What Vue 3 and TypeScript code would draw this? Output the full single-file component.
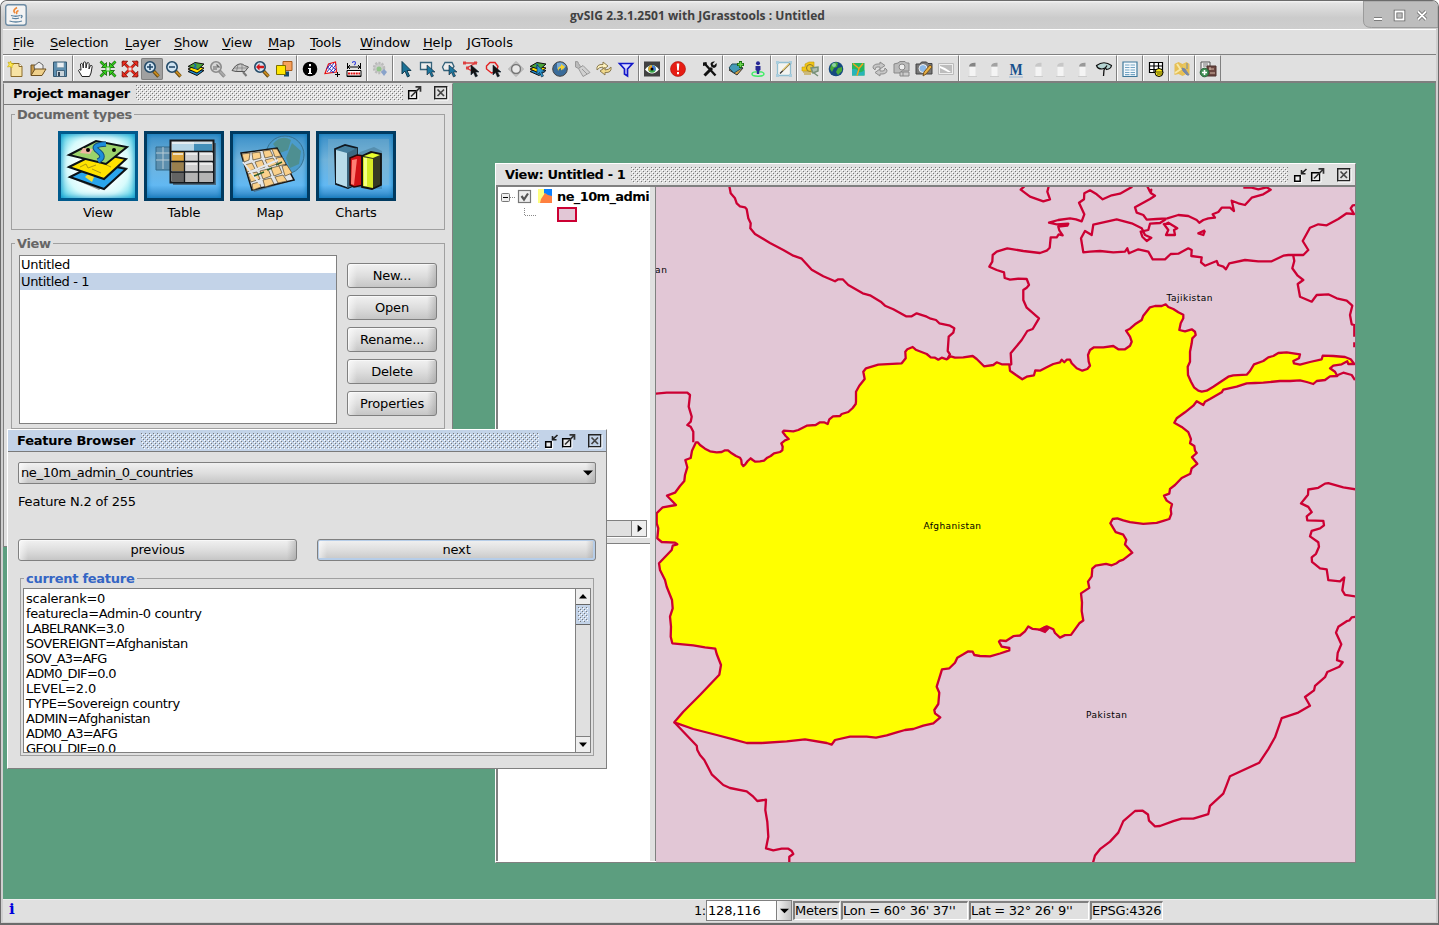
<script setup lang="ts">
type Pt = number[]

function trace(ox: number, oy: number, raw: string, sy = 3): Pt[] {
  return raw.trim().split(/\s+/).map((p) => {
    const [x, y] = p.split(',').map(Number)
    return [ox + x / 3, oy + y / sy]
  })
}
const NW = (s: string) => trace(490, 155, s)
const NE = (s: string) => trace(930, 155, s)
const SW = (s: string) => trace(650, 380, s)
const SE = (s: string) => trace(1000, 380, s, 2.877)
const toPoints = (...parts: Pt[][]) =>
  parts.flat().map((p) => p[0].toFixed(1) + ',' + p[1].toFixed(1)).join(' ')

const afghanistan = toPoints(
  SW('138,187 143,187 150,195 165,206 180,214 200,217 215,216 225,211 234,211 245,220 258,228 270,233 274,240 275,252 280,258 286,253 293,243 302,235 308,240 316,245 330,244 342,242 352,233 362,228 372,220 390,216 397,211 398,200 394,190 405,181 416,177 407,168 398,156 401,152 430,154 445,150 470,137 497,135 510,127 522,127 533,132 538,118 549,109 570,108 575,102 595,96 608,84 617,72'),
  NW('1098,740 1098,710 1108,692 1124,672 1120,650 1128,640 1165,629 1235,625 1247,610 1246,590 1252,583 1268,576 1277,584 1310,597 1322,607 1335,608 1345,614'),
  NE('35,608 50,613 62,604 75,608 100,607 128,603 140,612 150,622 162,634 190,630 200,622 215,628 238,628 240,647 258,660 277,673 290,665 312,661 316,646 330,647 350,637 370,627 390,622 395,614 403,622 410,614 420,614 425,625 440,640 457,647 472,642 480,632 476,620 474,600 480,585 492,577 520,577 550,573 565,583 585,583 600,572 605,560 600,545 588,527 600,521 615,508 635,495 640,482 660,457 675,453 695,453 707,448 715,456 730,462 745,472 760,479 760,490 752,505 748,525 765,529 785,523 795,530 797,540 787,550 785,565 780,590 780,620 773,635 774,660 783,680 792,697 805,707 815,710 830,707 850,695 870,682 895,665 910,661 950,659 960,648 972,628 1000,618 1015,607 1030,603 1045,594 1070,592 1110,598 1107,610 1090,618 1092,625 1110,629 1140,621 1175,613 1178,602 1210,603 1245,606 1262,613 1273,627 1255,627 1252,619 1235,628 1210,632 1200,640 1215,650 1222,663 1200,664 1185,675 1160,678 1150,687 1130,681 1110,676 1080,678 1050,678 1000,683 975,684 950,685 920,695 880,704 875,712 840,732 825,740 820,750 800,739 790,752 765,772 740,790 733,803'),
  SE('545,135 565,150 573,170 570,182 583,190 585,203 590,210 576,222 592,241 575,254 571,270 545,282 525,302 510,313 508,327 492,333 500,347 516,357 512,372 514,385 508,400 490,405 470,411 430,414 390,409 370,404 352,398 338,400 331,412 347,438 370,445 379,460 375,473 397,497 370,517 358,521 350,527 335,533 318,529 287,534 277,543 275,565 264,580 268,598 243,614 246,640 245,665 250,692 238,700 213,733 195,734 180,741 165,728 160,717 140,709 120,718 98,716 85,709 75,723 60,735 40,737 18,751 0,749 -3,753 5,767 28,771 28,778 0,787'),
  SW('1020,829 990,828 973,825 968,815 955,814 940,823 922,833 915,848 898,865 876,868 860,920 868,938 865,972 853,990 855,1000 871,1012 850,1030 820,1037 790,1047 765,1050 740,1057 710,1066 678,1073 650,1070 600,1070 555,1080 545,1094 530,1089 465,1078 410,1084 335,1089 290,1089 250,1078 200,1065 130,1047 73,1027 100,995 150,945 208,884 213,855 200,822 196,806 165,802 130,796 67,790 62,770 63,740 60,710 68,685 66,660 50,620 45,600 30,570 27,550 65,510 68,497 82,493 75,488 35,486 22,475 25,445 20,430 20,400 38,382 78,375 51,347 75,338 90,318 103,303 105,285 112,262 106,240 122,234 126,212 134,195'),
)

const borders: string[] = [
  toPoints(NW('718,93 722,115 735,130 740,145 750,154 765,157 770,163 775,190 782,205 781,220 795,237 840,264 880,285 910,302 935,311 965,344 1000,364 1035,379 1045,373 1058,373 1075,390 1118,415 1140,421 1172,440 1185,452 1210,463 1248,484 1265,484 1280,475 1310,485'), NE('2,491 18,495 28,505 60,512 73,520 70,533 56,545 53,588 60,598 52,612')),
  toPoints(SW('15,41 50,38 112,38 120,45 116,80 125,110 122,125 112,135 122,140 130,155 130,187')),
  toPoints(SW('73,1027 140,1097 142,1110 150,1125 163,1140 185,1183 220,1215 240,1224 290,1234 310,1250 322,1263 348,1259 346,1290 352,1325 355,1370 348,1405 370,1411 395,1406 415,1406 425,1413 430,1422 418,1430 418,1450')),
  toPoints(NE('240,630 244,628 242,595 275,555 292,528 308,522 327,490 290,458 280,435 280,405 290,398 297,390 290,372 265,371 240,374 224,369 222,352 200,345 178,335 187,320 188,300 200,290 232,280 280,288 330,294 350,287 359,278 362,247 380,247 386,238 398,241 388,226 385,215 412,212 415,206 380,208 357,203 385,195 420,190 438,193 455,199 463,178 447,143 462,133 463,115 480,106 500,118 518,133 545,121 570,116 607,95')),
  toPoints(NE('283,94 272,104 300,125 340,139 360,133 352,110 356,94')),
  toPoints(NE('652,94 660,110 664,104 662,114 675,122 660,132 615,157 620,173 640,180 650,194 680,192 712,190 745,180 775,183 800,195 808,203 820,195 835,190 855,188 848,178 865,171 875,158 900,158 912,168 905,137 925,145 945,150 965,128 1000,118 1022,104 1010,97 985,103 965,98 940,98')),
  toPoints(NE('708,192 690,204 660,206 655,225 632,230 637,245 650,258 664,248 645,240 635,220 605,205 560,193 490,209 485,240 465,228 453,250 460,292 480,290 510,288 550,292 585,290 592,280 597,295 625,283 655,290 668,313 705,313 722,297 745,296 775,280 785,285 784,303 815,307 813,322 825,332 860,318 865,330 880,335 888,343 898,325 945,315 985,319 1025,319 1060,302 1075,300 1120,300 1135,285 1118,258 1140,218 1165,208 1190,211 1225,192 1250,175 1272,177 1262,160 1268,151 1277,150')),
  toPoints(NE('700,205 715,225 708,240 735,240 732,225 742,220 715,203 705,208')),
  toPoints(NE('825,226 805,235 820,240 825,226')),
  toPoints(NE('1090,302 1093,318 1087,340 1103,362 1120,375 1103,387 1110,425 1145,440 1160,420 1195,418 1220,430 1250,437 1267,452 1260,480 1265,508 1273,510 1273,545')),
  toPoints(NE('1273,562 1273,577')),
  toPoints(NE('1222,661 1240,653 1265,660 1275,675')),
  toPoints(SE('1070,315 1030,309 985,297 975,298 955,310 925,315 924,330 903,355 925,365 935,380 920,392 922,404 970,405 972,418 960,427 935,434 930,450 955,467 957,480 948,500 935,510 936,523 960,542 980,545 985,576 1020,579 1033,568 1027,605 1035,618 1068,623')),
  toPoints(SE('1070,681 1055,683 1048,692 1040,694 1015,710 1008,727 1024,760 1013,785 1011,806 1028,812 1018,825 982,840 975,855 945,880 942,893 915,912 930,937 895,957 845,973 825,1028 805,1062 778,1101 690,1140 680,1165 670,1190 630,1225 625,1249 580,1262 545,1262 520,1269 480,1283 465,1284 447,1268 444,1250 428,1239 405,1240 370,1269 355,1302 330,1328 300,1350 285,1368 278,1392')),
]

const cursor = (f: string) => `<path d="M8 5v10l2.500-2.500 2 4.500 2-1-2-4h3.500z" fill="${f}" stroke="#123" stroke-width=".6"/>`
const lens = (inner: string, ring = '#234a68', face = '#cfe3f2', handle = '#c98a1e') =>
  `<path d="M10.500 11l5 5.500" stroke="${ring === '#8b8b8b' ? '#888' : '#5c430d'}" stroke-width="3.400"/><path d="M11 11.500l4.500 4.500" stroke="${handle}" stroke-width="2"/><circle cx="7" cy="7" r="5.200" fill="${face}" stroke="${ring}" stroke-width="1.600"/>${inner}`
const marker = (top: string) =>
  `<path d="M6.500 7h6v9.500h-6z" fill="#f4f4f4"/><path d="M6 6.500q0-4 6.500-3.800v3.800z" fill="${top}"/><path d="M5 16.500h9" stroke="#ccc"/>`
const arrows4 = (c: string, dark: string, out: boolean) => {
  const head = out ? 'M1.200 1.200h5.500l-5.500 5.500z' : 'M7.500 2.500v5h-5z'
  const one = `<path d="M1.500 1.500l6 6" stroke="${dark}" stroke-width="2.600"/><path d="M1.500 1.500l6 6" stroke="${c}" stroke-width="1.400"/><path d="${head}" fill="${c}" stroke="${dark}" stroke-width=".8"/>`
  return [0, 90, 180, 270].map((a) => `<g transform="rotate(${a} 9 9)">${one}</g>`).join('') + `<path d="M7 7h4v4H7z" fill="#e6e6e6" stroke="${c}"/>`
}
const layers = (top: string) =>
  `<path d="M1 11.500l7-3 9 2-7 5z" fill="#1d87c9" stroke="#111"/><path d="M1 9l7-3 9 2-7 5z" fill="#ffe000" stroke="#111"/><path d="M1 6.500l7-4 9 1.500-6 5.500z" fill="${top}" stroke="#111"/><path d="M7 4q3 1 1 2.500t2 2" fill="none" stroke="#1565a8" stroke-width="1.500"/>`

const toolGroups: { sel?: number; gap?: boolean; icons: string[] }[] = [
  { icons: [
    `<path d="M4 3.500h8l3 3V16.500H4z" fill="#f7e3a4" stroke="#8a6a2a"/><path d="M12 3.500v3h3" fill="#fff" stroke="#8a6a2a"/><path d="M3.500 1l1 2.500L7 4 5 5.500 5 8 3 6.500 .5 7 2 4.500 1 2l2 1z" fill="#ffe94a" stroke="#c4a90c" stroke-width=".6"/>`,
    `<path d="M2 15V5h4l1 2h6v8z" fill="#c79a4b" stroke="#6e5120"/><path d="M5 6l5-4 4 3v6H6z" fill="#ededed" stroke="#666"/><path d="M2 15.500l4-6.500h11l-4 6.500z" fill="#efd08a" stroke="#6e5120"/>`,
    `<path d="M2.500 2h13v14.500h-13z" fill="#5e8fb0" stroke="#33566e"/><path d="M6 2.500h7v5H6z" fill="#e8eef2" stroke="#7b98aa" stroke-width=".6"/><path d="M5.500 10.500h8v6h-8z" fill="#c9d4db" stroke="#33566e" stroke-width=".8"/><path d="M7 12h2v4H7z" fill="#345"/>`,
  ] },
  { sel: 3, icons: [
    `<path d="M5 16.500L1.500 10.500q.5-1.700 2.500-.3L3.500 4q1.200-1.300 2.200.2L6.300 8 6.500 2.500q1.300-1.300 2.300 0L9 8l1-5q1.500-1 2.200.5L12 9l1.500-3.500q1.700-.5 1.700 1L14 13l-1.500 3.500z" fill="#fff" stroke="#222" stroke-width="1"/>`,
    arrows4('#35d11c', '#155c0c', false),
    arrows4('#ef2b1c', '#7c120c', true),
    lens(`<path d="M4 7h6M7 4v6" stroke="#1b4263" stroke-width="1.500"/>`),
    lens(`<path d="M4 7h6" stroke="#1b4263" stroke-width="1.500"/>`),
    layers('#4ba53a'),
    lens(`<path d="M4 7h6l-2.500-2.500M4 9h4" stroke="#666" fill="none" stroke-width="1.200"/>`, '#8b8b8b', '#d5d5d5', '#aaa'),
    `<path d="M1 10.500l3.500-4.500q5-4 9-.5l4 1.500-3.500 4.500H5z" fill="#c9c9c9" stroke="#555"/><path d="M3 8h13M7 4.500l-1.500 7M11 4v7" stroke="#777" stroke-width=".7"/><path d="M12 12l3.500 4" stroke="#777" stroke-width="2"/>`,
    lens(`<path d="M3 7l3.500-3.500v2.200h4.500v2.600H6.500v2.200z" fill="#d3161b"/>`),
    `<path d="M8 1.500h9v9H8z" fill="#f7a15c" stroke="#a85c1c"/><path d="M9 11.500h5v5H9z" fill="#174a6e"/><path d="M1.500 5.500h9v9h-9z" fill="#ffe600" stroke="#7c7000"/>`,
  ] },
  { icons: [
    `<circle cx="9" cy="9" r="7.300" fill="#000"/><path d="M7 8h3v5h1v1H7v-1h1V9H7zM8 4h2v2.300H8z" fill="#fff"/>`,
    `<path d="M2 13.500L5.500 4 12.500 2l1 10z" fill="#fff" stroke="#e60d0d" stroke-width="1.200"/><path d="M4 12l7-9M7 12.500l6-8M3.500 9l4-5M10 12.500l3-4M4.500 7l6.500 6M6.500 4l6.500 6" stroke="#1c20b8" stroke-width=".9"/><path d="M12 14.500h5M14.500 12v5" stroke="#000"/>`,
    `<path d="M2.500 3v6M15.500 3v6M3 7h12M5 5L3 7l2 2M13 5l2 2-2 2" fill="none" stroke="#000"/><path d="M7.500 3q0-1.500 1.500-1.500T10.500 3 9 5" fill="none" stroke="#3440dd" stroke-width="1.200"/><path d="M2 10.500h14v6H2z" fill="#fff" stroke="#000"/><path d="M3 13.500h12" stroke="#e31212" stroke-width="1.800" stroke-dasharray="2 .6"/><path d="M2 16.200h14" stroke="#000" stroke-width="1.500"/>`,
  ] },
  { icons: [`<circle cx="8" cy="8" r="5" fill="#ccc" stroke="#bbb" stroke-width="2.500" stroke-dasharray="2 1.200"/><circle cx="8" cy="9" r="2.500" fill="#93c58b"/><path d="M10 12l3-3 3 3-3 4z" fill="#89a3cb"/>`] },
  { icons: [
    `<path d="M5 1.500v12.500l3-3 2.500 6 2-1-2.500-5.500h4z" fill="#1a7196" stroke="#123c50"/>`,
    `<path d="M1.500 2.500h11v7h-11z" fill="#eee" stroke="#35627a" stroke-width="1.300"/>` + cursor('#1d769d'),
    `<path d="M4 2.500h7l2 4-3 4H3L1.500 7z" fill="#eee" stroke="#35627a" stroke-width="1.300"/>` + cursor('#1d769d'),
    `<path d="M1.500 3h11L4 8l8 5" fill="none" stroke="#dd4040" stroke-width="1.400"/><path d="M0 1.500h3v3H0zM11 1.500h3v3h-3zM3 6.500h3v3H3z" fill="#dd4040"/>` + cursor('#111'),
    `<path d="M5 2.500h5l3 4-1.500 5-5 1.500L1.500 9V6z" fill="none" stroke="#e32222" stroke-width="1.400"/>` + cursor('#111'),
    `<path d="M9 1.500L16.500 9 9 16.500 1.500 9z" fill="#ccc" stroke="#aaa"/><circle cx="9" cy="9" r="4.500" fill="#e8e8e8" stroke="#777" stroke-width="1.500"/>`,
    layers('#4ba53a') + cursor('#2a96cf'),
    `<circle cx="9" cy="9" r="7.300" fill="#3a6b99" stroke="#444"/><path d="M6 3q6-2 9 3l-3 4-2-2-4 1z" fill="#79a9d2"/><path d="M7 11q-1-4 3-5V4l4 3-4 3.500V8q-2 0-3 3z" fill="#f6d32c"/>`,
    `<path d="M2.500 1.500q3-.5 3 2l2 3-2 2-3-1.500z" fill="#bbb" stroke="#999"/><path d="M5.500 8.500l4.500-3 7 7-7 4z" fill="#d0d0d0" stroke="#999"/><path d="M9 9l5 5" stroke="#999"/>`,
    `<path d="M2 10q-1-6 6-5.500V2l5 4-5 4V7q-4 0-6 3z" fill="#fff3bf" stroke="#8b7b4f"/><path d="M16 7q1 6-6 5.500v2.500l-5-4 5-3.500V10q4 0 6-3z" fill="#f1d98b" stroke="#8b7b4f"/>`,
    `<path d="M2.500 3.500h13L10.500 9v7l-3-2V9z" fill="#dcdcff" stroke="#1217c9" stroke-width="1.700"/>`,
  ] },
  { icons: [`<path d="M1 1.500h16v15H1z" fill="#414141"/><path d="M2 9.500q7-9 14 0-7 8-14 0z" fill="#fff"/><circle cx="9" cy="9" r="3.800" fill="#37a446"/><path d="M9 9V5.200A3.800 3.800 0 0 1 12 11z" fill="#4476df"/><path d="M9 9L6 11A3.800 3.800 0 0 1 9 5.200z" fill="#f0a025"/><circle cx="9" cy="9" r="1.500" fill="#000"/>`] },
  { gap: true, icons: [
    `<circle cx="9" cy="9" r="7.500" fill="#e61d14" stroke="#a80f0a" stroke-width=".6"/><path d="M7.700 3.500h2.600l-.5 7H8.200zM8 12h2v2.300H8z" fill="#fff"/>`,
    `<path d="M4 4l10.500 11.500" stroke="#111" stroke-width="2.300"/><path d="M3.500 15.500L11 8" stroke="#111" stroke-width="3"/><path d="M15.500 3L13 5.500 11.500 4 14 1.500q-4-.5-4.500 2.500l1 3 2.500 1q3.500-1 2.500-5zM2 6V2.500L5.500 2 6 5z" fill="#111"/>`,
  ] },
  { icons: [
    `<path d="M2 10l8-5 6 3-6 7z" fill="#d3a144" stroke="#333"/><path d="M2 8l3-4 8 0 2 4-8 5z" fill="#449ab8" stroke="#24505f"/><path d="M13.500 1v7M10 4.500h7" stroke="#1a6b12" stroke-width="3"/><path d="M13.500 2v5M11 4.500h5" stroke="#69d54f" stroke-width="1.500"/>`,
    `<ellipse cx="9" cy="14" rx="6" ry="2.200" fill="none" stroke="#43ec67" stroke-width="1.500"/><circle cx="9" cy="3.300" r="2" fill="#272895"/><path d="M6.500 6h5v4l-1.300 1v3H7.800v-3l-1.300-1z" fill="#272895"/>`,
  ] },
  { icons: [`<path d="M2.500 2.500h13v13h-13z" fill="#f4f4f0" stroke="#91bfd2" stroke-width="1.300"/><path d="M1 1h3v3H1zM14 1h3v3h-3zM1 14h3v3H1zM14 14h3v3h-3z" fill="#a9cddd"/><path d="M5 13.500L15 3.500" stroke="#333" stroke-width="1.200" fill="none"/><path d="M7 10l7-7 1 1-7 7z" fill="#e1c66d"/>`] },
  { icons: [`<path d="M1 7h3V4l4-2h5v9H1z" fill="#f3c614" stroke="#c29b0c" stroke-width=".6"/><circle cx="9" cy="8" r="3.500" fill="#edc82e" stroke="#8b762c"/><path d="M2 12h9M3 14h7" stroke="#b79319"/><path d="M10 8l7-1v4l-5 2zM13 13l4 3" stroke="#779078" stroke-width="1.500" fill="#acbcb0"/>`] },
  { icons: [
    `<circle cx="9" cy="9" r="7.300" fill="#164980"/><path d="M4 5q4-4 7-2l-1 4-3 1-2 4-2-3zM11 8l4-1v4l-4 4-2-3z" fill="#49aa38"/><circle cx="7" cy="5" r="2" fill="#a9e3d4" opacity=".7"/>`,
    `<path d="M3 3h12.500v12.500H3z" fill="#25b75d"/><path d="M3 9q4-1 6 2t6.500-1v5.500H3z" fill="#28b4b8"/><path d="M4 3.500l6 5 4-5M10 9l-2 6.500" stroke="#f2a11c" stroke-width="1.500" fill="none"/>`,
    `<path d="M2 8q0-4 5-4h2V2l5 3.500-5 3.500V7H6q-2 0-2 3z" fill="#c6c6c6" stroke="#8d8d8d"/><path d="M16 10q0 4-5 4H9v2l-5-3.500L9 9v2h3q2 0 2-3z" fill="#c6c6c6" stroke="#8d8d8d"/>`,
    `<path d="M1 4l4-1 2-1.500h5L13.500 3H16v8H9l-2 2H1z" fill="#bbb" stroke="#888"/><circle cx="9" cy="7" r="3" fill="#eee" stroke="#888"/><path d="M7 12h9v4H7zM10 12v4" fill="#ccc" stroke="#888"/>`,
    `<path d="M1 4h4l1.500-2h5L13 3.500h4V14H1z" fill="#777" stroke="#444"/><circle cx="8" cy="8.500" r="4" fill="#8db9e7" stroke="#eee"/><path d="M8 16l1-4 6-7 2 2-6 7z" fill="#eab245" stroke="#79541c"/>`,
    `<path d="M1.500 3.500h15v11h-15z" fill="#eee" stroke="#bbb"/><path d="M3 5h12v8H3z" fill="#bdbdbd"/><path d="M3 6l5 2 6 4h-3L3 8z" fill="#fff"/>`,
  ] },
  { icons: [
    marker('#858585'), marker('#a2a2a2'),
    `<text x="9" y="15" text-anchor="middle" font-family="Liberation Serif, serif" font-weight="bold" font-size="16" fill="#17518c" textLength="13" lengthAdjust="spacingAndGlyphs">M</text><path d="M2 17h14" stroke="#9bb7d2"/>`,
    marker('#c7c7c7'), marker('#c7c7c7'), marker('#999'),
    `<path d="M1.500 5.500q7.500-5.500 15 0-.5 3.500-5 4l-1-1.500L7 9Q2.500 9 1.500 5.500z" fill="#b5d4d2" stroke="#111" stroke-width="1.200"/><path d="M12 5.500l-3 4.500-.5 6" fill="none" stroke="#111" stroke-width="1.300"/>`,
  ] },
  { icons: [`<path d="M2 2h14v14.500H2z" fill="#f3f8fc" stroke="#3f799b" stroke-width="1.200"/><path d="M4 5h4.500M9.500 5H14M4 7.500h4.500M9.500 7.500H14M4 10h4.500M9.500 10H14M4 12.500h4.500M9.500 12.500H14M4 14.700h4.500M9.500 14.700H14" stroke="#74a5c4" stroke-width="1.200"/>`] },
  { icons: [`<path d="M2.500 2.500h13v10h-13zM7 2.500v10M11.500 2.500v10M2.500 6h13M2.500 9.500h13" fill="#fff" stroke="#000" stroke-width="1.200"/><ellipse cx="12" cy="12.500" rx="4" ry="4" fill="#ffee19" stroke="#000"/><path d="M8 12h8M10 14h5" stroke="#000" stroke-width=".7"/>`] },
  { icons: [`<path d="M1.500 4l4-2 4 2 4-2 3 2v11l-3-1-4 2-4-2-4 1z" fill="#e6bf55"/><path d="M4 4l4 6M2 13l6-4" stroke="#f7e8a6" stroke-width="2"/><circle cx="12" cy="6" r="2.500" fill="#e8c75e"/><path d="M9 8l3 1 4 6h-2l-4-4zM14 3v6" stroke="#7788a7" fill="#7788a7"/>`] },
  { icons: [`<path d="M2 2h9v8H2z" fill="#eee" stroke="#555"/><path d="M4 4h5M4 6h5" stroke="#777"/><path d="M8 6h9v10H8z" fill="#6b4640" stroke="#4c302c"/><path d="M10 9h5M11 7v3M11 13h5" stroke="#d6b9a8"/><circle cx="5.500" cy="12.500" r="4.300" fill="#3f8f54" stroke="#2b633b"/><path d="M3 12.500h5M5.500 10v5" stroke="#fff" stroke-width="1.600"/>`] },
]

const menus = ['File', 'Selection', 'Layer', 'Show', 'View', 'Map', 'Tools', 'Window', 'Help', 'JGTools']

const docTypes = [
  { name: 'View', art: `<path d="M13 47l28 12 29-22-30-8z" opacity=".4"/><path d="M12 46l28-14 28 6-22 20z" fill="#2aa5ec" stroke="#0a1116" stroke-width="2"/><path d="M27 46l5-5 4 5-2 5z" fill="#f6e22c"/><path d="M11 36l28-14 29 6-22 20z" fill="#ffe300" stroke="#0a1116" stroke-width="2"/><path d="M22 36l6-3 2 4 8-3M34 38l9 4M44 32l9 4" stroke="#b09a10" fill="none"/><path d="M11 24L38 10l31 6-21 17z" fill="#9bd36b" stroke="#0a1116" stroke-width="2"/><path d="M25 17l10 1-3 5-10-1z" fill="#efb7a2"/><path d="M48 13q-16 1-8 7t0 10" stroke="#164d7d" stroke-width="5.500" fill="none"/><path d="M48 13q-16 1-8 7t0 10" stroke="#1d8edb" stroke-width="3.500" fill="none"/><circle cx="30" cy="19" r="2"/><circle cx="56" cy="19" r="2"/>` },
  { name: 'Table', art: `<path d="M12 16h20v23H12z" fill="#5d8fae" stroke="#336888"/><path d="M12 22h14M12 29h14M19 16v22" stroke="#b9ccd5"/><path d="M29 12h43v42H29z" fill="#41474d" opacity=".7"/><path d="M26.500 9.500h43v42h-43z" fill="#ddd" stroke="#15191d" stroke-width="2"/><path d="M28 11h40v9H28z" fill="#438fb9"/><path d="M28 11h22v9H28z" fill="#b5d5e6"/><path d="M28 21h12v9H28z" fill="#dba43c"/><path d="M28 31h12v9H28z" fill="#9a804e"/><path d="M28 41h12v10H28z" fill="#636363"/><path d="M41 22h28v8H41zM41 32h28v8H41z" fill="#cfcfcf"/><path d="M41 42h28v9H41z" fill="#b4b4b4"/><path d="M27 20.500h42M27 30.500h42M27 41h42M40.500 20v31M54.500 20v31" stroke="#15191d" stroke-width="1.300"/><path d="M28 12h40M29 23h10M42 23h11M56 23h12M42 33h11M56 33h12" stroke="#f5f5f5" stroke-width="1.700"/>` },
  { name: 'Map', art: `<circle cx="55" cy="24" r="19" fill="#4b9ccc" stroke="#367190"/><path d="M43 13q8-10 18-4l-3 10-8 3zM62 12l9 8-2 13-9 4-4-10z" fill="#4e8f91"/><path d="M13 23l34-5 18 31-41 12z" fill="#444" opacity=".5"/><path d="M11 22l36-5 17 32-42 10z" fill="#e2e5e8" stroke="#151515" stroke-width="1.500"/><g fill="#fad08b" stroke="#51452f" stroke-width=".7"><path d="M12 23l8-1-1 7-5 2zM22 22l8-1 1 6-8 2zM33 20l7-1 3 6-8 2zM42 18l5 0 4 7-6 1zM15 34l7-2 3 6-8 3zM25 31l7-2 3 7-7 2zM35 29l8-2 4 6-8 3zM46 27l6-1 4 7-7 2zM18 43l9-2 3 7-9 3zM30 40l8-2 3 7-8 3zM41 37l8-2 3 7-8 3zM52 35l5-1 5 8-7 3zM22 53l7-2 2 5-8 3zM33 49l8-2 3 6-9 3zM45 46l8-2 4 6-9 2z"/></g><path d="M13 31l17 22M20 41l28-12" stroke="#e5e8ec" stroke-width="2"/><path d="M24 45l10-4M37 39l5-2M46 34l6-3" stroke="#295c2a" stroke-width="1.500"/>` },
  { name: 'Charts', art: `<path d="M12 8h61v46H12z" fill="#93bacb" opacity=".3"/><path d="M21 54l20 3 25 1V20l-8-4-14 5-3 4-3-8-11-3-7 5z" fill="#315b71" opacity=".35"/><path d="M19 18l10-4 12 3v36l-9 4-12-4z" fill="#447e9d" stroke="#101820" stroke-width="1.800"/><path d="M20 19l11 3v34l-11-4z" fill="#b9dcea"/><path d="M31 22l10-5v37l-10 3z" fill="#3c6880"/><path d="M34 27l7-3 7 1v29l-10 2-4-2z" fill="#d11115" stroke="#2b0606" stroke-width="1.500"/><path d="M36 29l5-1-3 26-3-1z" fill="#ff7e73"/><path d="M46 25l9-4 10 2v31l-9 4-10-2z" fill="#353a24" stroke="#111" stroke-width="1.800"/><path d="M47 26l10 2v29l-10-2z" fill="#d6eb26"/><path d="M48 27h3v28h-3z" fill="#f7ff86"/><path d="M48 25l8-3 8 2-7 3z" fill="#e9ff2f"/>` },
]
const actions = ['New...', 'Open', 'Rename...', 'Delete', 'Properties']
const attributes: { text: string; tracking: number }[] = [
  { text: 'scalerank=0', tracking: -0.24 },
  { text: 'featurecla=Admin-0 country', tracking: -0.35 },
  { text: 'LABELRANK=3.0', tracking: -0.77 },
  { text: 'SOVEREIGNT=Afghanistan', tracking: -0.49 },
  { text: 'SOV_A3=AFG', tracking: -0.75 },
  { text: 'ADM0_DIF=0.0', tracking: -0.66 },
  { text: 'LEVEL=2.0', tracking: -0.14 },
  { text: 'TYPE=Sovereign country', tracking: -0.36 },
  { text: 'ADMIN=Afghanistan', tracking: -0.46 },
  { text: 'ADM0_A3=AFG', tracking: -0.76 },
  { text: 'GEOU_DIF=0.0', tracking: -0.66 },
]
const minimizeArt = `<path d="M2.700 8.700h5.500v5.500H2.700z" fill="#eee" stroke="#000" stroke-width="1.500"/><path d="M9.700 8v7.500H2.500" stroke="#fff" fill="none"/><path d="M9.500 3v3.700h4M10 6.200L14.500 2" stroke="#222" stroke-width="1.600" fill="none"/>`
const maximizeArt = `<path d="M1.700 5.700h8v8h-8z" fill="#eee" stroke="#000" stroke-width="1.500"/><path d="M11 6v9H2" stroke="#fff" fill="none"/><path d="M4 11.500L13 2.500M8.500 1.800h5v5" stroke="#333" stroke-width="1.700" fill="none"/>`
const closeArt = `<path d="M1.700 1.700h12v12h-12z" fill="none" stroke="#222" stroke-width="1.400"/><path d="M15 2v13H2" stroke="#fff" fill="none"/><path d="M4.500 4.500l6.500 6.500M11 4.500L4.500 11" stroke="#444" stroke-width="1.700"/>`
</script>

<template>
  <div class="frame">
    <header class="titlebar">
      <svg class="java" viewBox="0 0 22 22">
        <rect x=".7" y=".7" width="20.500" height="20.500" rx="2.500" fill="#f3f3f3" stroke="#6d8ba3" stroke-width="1.400" />
        <path d="M12 3.500q-5 3-2 5.500M13.500 6.500q-3 1.500-1.500 3.500" fill="none" stroke="#ee8836" stroke-width="1.700" />
        <path d="M6 11.500q5 1.500 9 0M7 14q4 1.300 7 0M4.500 17q6.500 2 12.500 0M15.500 11.500q3 0 .5 2.500" fill="none" stroke="#5b82a0" stroke-width="1.300" />
      </svg>
      <span class="caption">gvSIG 2.3.1.2501 with JGrasstools : Untitled</span>
      <svg class="controls" viewBox="0 0 75 28">
        <path d="M.5 0V20q0 6.500 8 6.500H75V0z" fill="#bdbdbd" stroke="#9b9b9b" />
        <g fill="none" stroke="#666" stroke-width="3.500"><path d="M11 18h8M32.500 10.500h8v8h-8zM55 10.500l8 8M63 10.500l-8 8" /></g>
        <g fill="none" stroke="#fff" stroke-width="1.800"><path d="M11 18h8M32.500 10.500h8v8h-8zM55 10.500l8 8M63 10.500l-8 8" /></g>
      </svg>
    </header>

    <nav class="menubar">
      <span v-for="m in menus" :key="m"><u v-if="m !== 'JGTools'">{{ m[0] }}</u>{{ m === 'JGTools' ? m : m.slice(1) }}</span>
    </nav>

    <div class="toolbar">
      <div v-for="(g, gi) in toolGroups" :key="gi" class="group" :class="{ spaced: g.gap }">
        <span v-for="(icon, ii) in g.icons" :key="ii" class="tool" :class="{ active: g.sel === ii }">
          <svg viewBox="0 0 18 18" v-html="icon" />
        </span>
      </div>
    </div>

    <main class="desktop">
      <section class="win project">
        <div class="win-title">
          <b>Project manager</b><i class="bumps" />
          <svg class="wi" viewBox="0 0 16 16" v-html="maximizeArt" />
          <svg class="wi close" viewBox="0 0 16 16" v-html="closeArt" />
        </div>
        <div class="project-body">
          <div class="box types">
            <h3>Document types</h3>
            <div v-for="(d, i) in docTypes" :key="d.name" class="doc">
              <div class="doc-btn" :class="{ chosen: i === 0 }"><svg viewBox="0 0 80 70" v-html="d.art" /></div>
              <span>{{ d.name }}</span>
            </div>
          </div>
          <div class="box views">
            <h3>View</h3>
            <ul class="list"><li>Untitled</li><li class="picked">Untitled - 1</li></ul>
            <div class="actions"><button v-for="a in actions" :key="a">{{ a }}</button></div>
          </div>
        </div>
      </section>

      <section class="win viewer">
        <div class="win-title">
          <b>View: Untitled - 1</b><i class="bumps" />
          <svg class="wi" viewBox="0 0 16 16" v-html="minimizeArt" />
          <svg class="wi" viewBox="0 0 16 16" v-html="maximizeArt" />
          <svg class="wi close" viewBox="0 0 16 16" v-html="closeArt" />
        </div>
        <div class="viewer-body">
          <div class="toc">
            <div class="tree">
              <div class="layer">
                <svg width="58" height="40" viewBox="0 0 58 40">
                  <path d="M12 10.500h6M26.500 21v7M27 28.500h12" stroke="#888" stroke-dasharray="1 1" fill="none" />
                  <rect x="3.500" y="6.500" width="8" height="8" rx="1" fill="#eee" stroke="#777" />
                  <path d="M5 10.500h5" stroke="#000" />
                  <rect x="20.500" y="3.500" width="12" height="12" fill="#eee" stroke="#777" stroke-width="1.200" />
                  <path d="M23.500 9l2.500 3.500 4-6" fill="none" stroke="#555" stroke-width="2.200" />
                  <path d="M40 2h14v14H40z" fill="#ffff80" /><path d="M46 2h8v7h-5l-3-3z" fill="#0a80ff" /><path d="M42 16l1-4 2-3 2-3 3 2 4 1v7z" fill="#ff8040" />
                </svg>
                <b>ne_10m_admi</b>
              </div>
              <i class="symbol" />
            </div>
            <div class="hscroll"><svg viewBox="0 0 15 15"><path d="M6 3.500v8l5-4z" /></svg></div>
            <div class="divider" />
            <div class="overview" />
          </div>
          <div class="splitter" />
          <svg class="map" viewBox="656 187 699 675">
            <rect x="656" y="187" width="699" height="675" fill="#e2c7d6" />
            <polygon :points="afghanistan" fill="#ff0" />
            <g fill="none" stroke="#cc0033" stroke-width="2.300" stroke-linejoin="round">
              <polygon :points="afghanistan" />
              <polyline v-for="(b, i) in borders" :key="i" :points="b" />
            </g>
            <path d="M1045 627l3 2-3 3-5-2z" fill="#cc0033" stroke="#cc0033" stroke-width="2" />
            <g class="labels">
              <text x="655" y="273" textLength="12">an</text>
              <text x="1166.500" y="301" textLength="46">Tajikistan</text>
              <text x="923.500" y="529" textLength="57.500">Afghanistan</text>
              <text x="1086" y="718" textLength="41">Pakistan</text>
            </g>
          </svg>
        </div>
      </section>

      <section class="win browser">
        <div class="win-title">
          <b>Feature Browser</b><i class="bumps" />
          <svg class="wi" viewBox="0 0 16 16" v-html="minimizeArt" />
          <svg class="wi" viewBox="0 0 16 16" v-html="maximizeArt" />
          <svg class="wi close" viewBox="0 0 16 16" v-html="closeArt" />
        </div>
        <div class="browser-body">
          <div class="combo"><span>ne_10m_admin_0_countries</span><svg viewBox="0 0 10 6"><path d="M0 .5h10L5 5.500z" /></svg></div>
          <p>Feature N.2 of 255</p>
          <div class="pager"><button>previous</button><button class="focus">next</button></div>
          <div class="box current">
            <h3>current feature</h3>
            <div class="text">
              <div class="lines">
                <div v-for="a in attributes" :key="a.text" :style="{ letterSpacing: a.tracking + 'px' }">{{ a.text }}</div>
              </div>
              <div class="vscroll">
                <svg class="arr" viewBox="0 0 14 15"><path d="M3 9.500h8L7 5z" /></svg>
                <div class="thumb"><i class="bumps" /></div>
                <div class="track" />
                <svg class="arr" viewBox="0 0 14 15"><path d="M3 5.500h8L7 10z" /></svg>
              </div>
            </div>
          </div>
        </div>
      </section>
    </main>

    <footer class="status">
      <span class="info">i</span>
      <span class="ratio">1:</span>
      <span class="scale">128,116</span>
      <span class="drop"><svg viewBox="0 0 10 6"><path d="M0 .5h10L5 5.500z" /></svg></span>
      <span class="cell units">Meters</span>
      <span class="cell lon">Lon = 60° 36' 37''</span>
      <span class="cell lat">Lat = 32° 26' 9''</span>
      <span class="cell epsg">EPSG:4326</span>
    </footer>
  </div>
</template>

<style>
body { margin: 0; overflow: hidden; background: #fff; }
</style>

<style scoped>
.frame { box-sizing: border-box; width: 1439px; height: 925px; border: 1px solid #6b6b6b; border-width: 1px 1px 2px; border-radius: 7px 7px 0 0; padding: 0 2px 1px; background: #cfcfcf; display: flex; flex-direction: column; overflow: hidden; font: 13px/15px "DejaVu Sans", sans-serif; letter-spacing: -.17px; color: #000; }
svg { display: block; flex: none; }
.titlebar { height: 28px; margin: 0 -2px; flex: none; display: flex; align-items: flex-start; background: linear-gradient(#f5f5f5 0, #e3e3e3 8%, #cbcbcb 60%, #cecece); }
.java { width: 22px; height: 22px; margin: 3px 0 0 4px; }
.caption { flex: 1; text-align: center; margin: 6px 0 0 -26px; font: bold 12px/17px "Open Sans", sans-serif; color: #404040; letter-spacing: .03px; padding-left: 31px; }
.controls { width: 75px; height: 28px; }
.menubar { height: 26px; flex: none; border-top: 1px solid #fff; border-bottom: 1px solid #808080; box-sizing: border-box; background: #e0e0e0; display: grid; grid-template-columns: 37px 75px 49px 48px 46px 42px 50px 63px 44px 70px; padding: 5px 0 0 10px; }
.menubar span { white-space: nowrap; }
.menubar span:last-child { letter-spacing: .1px; }
.menubar u { text-underline-offset: 2px; text-decoration-thickness: 1px; text-decoration-skip-ink: none; }
.toolbar { height: 28px; flex: none; box-sizing: border-box; background: #e0e0e0; border-bottom: 2px solid #7e7e7e; display: flex; }
.group { display: flex; align-items: center; padding: 0 1px; border-left: 1px solid #fff; border-right: 1px solid #808080; border-top: 1px solid #fff; }
.spaced { gap: 10px; }
.tool { width: 22px; height: 22px; box-sizing: border-box; padding: 2px; }
.tool svg { width: 18px; height: 18px; }
.active { background: #a0a0a0; box-shadow: inset 0 0 0 1px #808080; border-radius: 2px; }
.desktop { flex: 1; position: relative; overflow: hidden; background: #5c9e7f; border-right: 1px solid #888; }
.win { position: absolute; box-sizing: border-box; background: #e0e0e0; border: 1px solid #fff; border-right-color: #808080; border-bottom-color: #808080; display: flex; flex-direction: column; }
.win-title { height: 22px; flex: none; box-sizing: border-box; border-bottom: 1px solid #7a7a7a; display: flex; align-items: center; padding: 0 3px 0 9px; }
.win-title b { white-space: nowrap; letter-spacing: -.22px; }
.bumps { background: conic-gradient(from 0deg at 1px 1px, transparent 270deg, #777 0) 0 0/4px 4px, conic-gradient(from 0deg at 1px 1px, transparent 270deg, #777 0) 2px 2px/4px 4px, conic-gradient(from 0deg at 1px 1px, transparent 270deg, #fff 0) 1px 1px/4px 4px, conic-gradient(from 0deg at 1px 1px, transparent 270deg, #fff 0) 3px 3px/4px 4px; }
.win-title .bumps { flex: 1; height: 16px; margin: 0 4px 0 6px; }
.wi { width: 16px; height: 16px; margin-right: 2px; }
.wi.close { margin: 0 0 0 8px; }
.project { left: 0; top: 0; width: 450px; height: 464px; border-color: #e0e0e0 #808080 #808080 #808080; }
.project .win-title { height: 21px; padding-bottom: 2px; }
.project .win-title b { letter-spacing: -.3px; }
.project-body { padding: 9px 7px 0; }
.box { position: relative; box-sizing: border-box; border: 1px solid #a0a0a0; }
.box h3 { position: absolute; left: 3px; top: -8px; margin: 0; padding: 0 2px; background: #e0e0e0; font-size: 13px; line-height: 15px; color: #666; white-space: nowrap; letter-spacing: -.34px; }
.types { height: 116px; display: flex; justify-content: center; gap: 6px; padding: 16px 2px 0 0; }
.doc { width: 80px; text-align: center; }
.doc span { display: block; margin-top: 4px; }
.doc-btn { box-sizing: border-box; width: 80px; height: 70px; border: 3px solid #003a60; background: linear-gradient(#3a8fc8, #6fb2da 40%, #62b8f2 80%, #2c84c4); box-shadow: inset 0 0 5px #0877b8; }
.doc-btn svg { width: 80px; height: 70px; margin: -3px; }
.chosen { background: radial-gradient(circle, #fff 35%, #d7fbfc 65%, #43cce4); box-shadow: inset 0 0 6px #038bc5; border-color: #005a8d; }
.views { height: 186px; margin-top: 13px; display: flex; padding: 11px 7px 0; justify-content: space-between; }
.list { box-sizing: border-box; width: 318px; height: 169px; border: 1px solid #808080; background: #fff; margin: 0; padding: 0; list-style: none; line-height: 17px; letter-spacing: -.3px; }
.list li { padding-left: 1px; height: 17px; }
.picked { background: #c3d3e8; letter-spacing: -.38px; }
.actions { width: 90px; padding-top: 8px; display: flex; flex-direction: column; gap: 7px; }
button { box-sizing: border-box; width: 90px; height: 25px; padding: 0; border: 1px solid #808080; border-radius: 3px; font: inherit; letter-spacing: inherit; color: #000; background: linear-gradient(90deg, #fff9 0, #fff0 9px, #fff0 calc(100% - 9px), #8886 100%), linear-gradient(#f1f1f1, #dedede 50%, #c6c6c6); box-shadow: inset 1px 1px 0 #fff8; }
.viewer { left: 492px; top: 80px; width: 861px; height: 700px; border-left-color: #fff; }
.viewer .win-title { height: 23px; border-bottom: 2px solid #808080; }
.viewer .win-title b { letter-spacing: -.4px; }
.viewer-body { flex: 1; display: flex; border-right: 1px solid #fff; border-bottom: 1px solid #fff; min-height: 0; }
.toc { width: 154px; flex: none; border-left: 2px solid #808080; box-sizing: border-box; display: flex; flex-direction: column; background: #fff; }
.tree { height: 333px; }
.layer { height: 40px; display: flex; width: 152px; }
.layer b { padding: 2px 0 0 1px; letter-spacing: -.62px; white-space: nowrap; }
.symbol { display: block; margin: -20px 0 0 59px; width: 16px; height: 11px; border: 2px solid #cc0033; background: #e2c7d6; }
.hscroll { height: 17px; width: 149px; box-sizing: border-box; border: 1px solid #808080; background: #e0e0e0; display: flex; justify-content: flex-end; }
.hscroll svg { width: 14px; height: 15px; background: #eee; border-left: 1px solid #808080; }
.divider { height: 7px; background: #e0e0e0; border-top: 1px solid #fff; border-bottom: 1px solid #808080; box-sizing: border-box; }
.overview { flex: 1; }
.splitter { width: 6px; flex: none; box-sizing: border-box; background: #e0e0e0; border-right: 1px solid #808080; }
.map { width: 699px; height: 675px; }
.labels { font: 9px "DejaVu Sans", sans-serif; letter-spacing: 0; }
.browser { left: 4px; top: 346px; width: 600px; height: 340px; }
.browser .win-title { background: #c3d3e8; }
.browser h3 { color: #3465c4; letter-spacing: -.27px; }
.browser-body { padding: 10px; display: flex; flex-direction: column; }
.combo { box-sizing: border-box; width: 578px; height: 22px; border: 1px solid #808080; border-radius: 2px; background: linear-gradient(90deg, #fff9 0, #fff0 9px, #fff0 calc(100% - 9px), #8885 100%), linear-gradient(#f1f1f1, #dedede 50%, #c6c6c6); display: flex; align-items: center; justify-content: space-between; padding: 0 2px 1px; letter-spacing: -.37px; }
.combo svg { width: 10px; height: 6px; }
.browser-body p { margin: 10px 0 0; height: 45px; }
.pager { display: flex; justify-content: space-between; width: 578px; }
.pager button { width: 279px; height: 22px; padding-bottom: 2px; }
.pager .focus { box-shadow: inset 0 0 0 1px #b6cde8, inset -1px -1px 0 1px #b6cde8; }
.current { width: 574px; height: 178px; margin: 17px 0 0 2px; padding: 9px 2px 0; }
.text { box-sizing: border-box; width: 568px; height: 165px; border: 1px solid #808080; background: #fff; display: flex; justify-content: space-between; overflow: hidden; }
.lines { padding: 2px; white-space: nowrap; }
.vscroll { width: 14px; border-left: 1px solid #808080; display: flex; flex-direction: column; background: #e0e0e0; }
.arr { height: 15px; width: 14px; background: #eee; }
.thumb { height: 21px; box-sizing: border-box; border: 1px solid #666; border-width: 1px 0; background: #c3d3e8; padding: 2px; display: flex; }
.thumb .bumps { flex: 1; }
.track { flex: 1; border-bottom: 1px solid #808080; }
.status { height: 23px; flex: none; background: #e0e0e0; border-top: 1px solid #eee; box-sizing: border-box; display: flex; align-items: flex-start; white-space: nowrap; }
.status > span { box-sizing: border-box; }
.info { width: 691px; padding: 1px 0 0 6px; font: bold 15px/16px "DejaVu Serif", serif; color: #0000dc; }
.ratio { width: 12px; padding-top: 3px; letter-spacing: -.5px; }
.scale { width: 71px; height: 21px; background: #fff; border: 1px solid #808080; padding: 2px 1px; }
.drop { width: 15px; height: 21px; border: 1px solid #808080; border-left: 0; background: linear-gradient(90deg, #f5f5f5, #c0c0c0); display: grid; place-items: center; margin-right: 1px; }
.drop svg { width: 9px; height: 6px; }
.cell { height: 19px; margin-top: 1px; border: 2px solid; border-color: #808080 #fff #fff #808080; border-width: 2px 1px 1px 2px; padding-top: 0; margin-right: 1px; letter-spacing: -.28px; }
.units { width: 47px; } .lon { width: 127px; } .lat { width: 120px; } .epsg { width: 73px; }
</style>
